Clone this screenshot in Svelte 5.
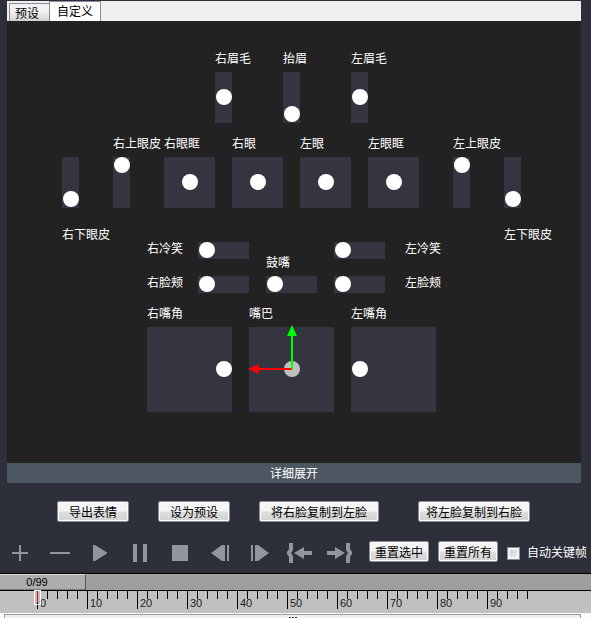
<script lang="ts">
	type Axis = 'x' | 'y';

	// row / col are tracks of the 17px face grid
	const sliders: { id: string; row: number; col: number; axis: Axis; value: number }[] = [
		{ id: 'brow-r', row: 2, col: 10, axis: 'y', value: 50 },
		{ id: 'brow-up', row: 2, col: 14, axis: 'y', value: 0 },
		{ id: 'brow-l', row: 2, col: 18, axis: 'y', value: 50 },
		{ id: 'lid-low-r', row: 7, col: 1, axis: 'y', value: 0 },
		{ id: 'lid-up-r', row: 7, col: 4, axis: 'y', value: 100 },
		{ id: 'lid-up-l', row: 7, col: 24, axis: 'y', value: 100 },
		{ id: 'lid-low-l', row: 7, col: 27, axis: 'y', value: 0 },
		{ id: 'sneer-r', row: 12, col: 9, axis: 'x', value: 0 },
		{ id: 'sneer-l', row: 12, col: 17, axis: 'x', value: 0 },
		{ id: 'cheek-r', row: 14, col: 9, axis: 'x', value: 0 },
		{ id: 'puff', row: 14, col: 13, axis: 'x', value: 0 },
		{ id: 'cheek-l', row: 14, col: 17, axis: 'x', value: 0 }
	];

	const pads = [
		{ id: 'socket-r', row: 7, col: 7, size: 3, align: 'center' },
		{ id: 'eye-r', row: 7, col: 11, size: 3, align: 'center' },
		{ id: 'eye-l', row: 7, col: 15, size: 3, align: 'center' },
		{ id: 'socket-l', row: 7, col: 19, size: 3, align: 'center' },
		{ id: 'corner-r', row: 17, col: 6, size: 5, align: 'end' },
		{ id: 'mouth', row: 17, col: 12, size: 5, align: 'center' },
		{ id: 'corner-l', row: 17, col: 18, size: 5, align: 'start' }
	];

	const labels = [
		{ for: 'brow-r', text: '右眉毛', row: 1, col: 10, place: 'above' },
		{ for: 'brow-up', text: '抬眉', row: 1, col: 14, place: 'above' },
		{ for: 'brow-l', text: '左眉毛', row: 1, col: 18, place: 'above' },
		{ for: 'lid-up-r', text: '右上眼皮', row: 6, col: 4, place: 'above' },
		{ for: 'socket-r', text: '右眼眶', row: 6, col: 7, place: 'above' },
		{ for: 'eye-r', text: '右眼', row: 6, col: 11, place: 'above' },
		{ for: 'eye-l', text: '左眼', row: 6, col: 15, place: 'above' },
		{ for: 'socket-l', text: '左眼眶', row: 6, col: 19, place: 'above' },
		{ for: 'lid-up-l', text: '左上眼皮', row: 6, col: 24, place: 'above' },
		{ for: 'lid-low-r', text: '右下眼皮', row: 11, col: 1, place: 'below' },
		{ for: 'lid-low-l', text: '左下眼皮', row: 11, col: 27, place: 'below' },
		{ for: 'sneer-r', text: '右冷笑', row: 12, col: 6, place: 'before' },
		{ for: 'sneer-l', text: '左冷笑', row: 12, col: 21, place: 'after' },
		{ for: 'puff', text: '鼓嘴', row: 13, col: 13, place: 'above' },
		{ for: 'cheek-r', text: '右脸颊', row: 14, col: 6, place: 'before' },
		{ for: 'cheek-l', text: '左脸颊', row: 14, col: 21, place: 'after' },
		{ for: 'corner-r', text: '右嘴角', row: 16, col: 6, place: 'above' },
		{ for: 'mouth', text: '嘴巴', row: 16, col: 12, place: 'above' },
		{ for: 'corner-l', text: '左嘴角', row: 16, col: 18, place: 'above' }
	];

	const tools = [
		{ name: '添加', path: 'M19 3h2v7h7v2h-7v7h-2v-7h-7v-2h7z' },
		{ name: '删除', path: 'M10 10h20v2H10z' },
		{ name: '播放', path: 'M13 3h2l12 7.5v1L15 19h-2z' },
		{ name: '暂停', path: 'M13 2h4v18h-4zM23 2h4v18h-4z' },
		{ name: '停止', path: 'M12 3h16v16H12z' },
		{ name: '上一帧', path: 'M11 11L22 3h3v16h-3zM27 3h2v16h-2z' },
		{ name: '下一帧', path: 'M11 3h2v16h-2zM15 3h3l11 8-11 8h-3z' },
		{
			name: '上一关键帧',
			path: 'M9 1h4v7l-2 3 2 3v7H9v-6l-2-3v-2l2-3zM14 11l10-6v4h8v4h-8v4z'
		},
		{
			name: '下一关键帧',
			path: 'M30 1h-4v7l2 3-2 3v7h4v-6l2-3v-2l-2-3zM25 11L15 5v4H7v4h8v4z'
		}
	];

	const ticks = Array.from({ length: 50 }, (_, i) => i * 2);

	let tab = $state('custom');
	let autoKey = $state(false);
</script>

<main>
	<section class="panel">
		<nav class="tabs">
			<button class="tab" class:active={tab === 'preset'} onclick={() => (tab = 'preset')}>预设</button>
			<button class="tab" class:active={tab === 'custom'} onclick={() => (tab = 'custom')}>自定义</button>
		</nav>

		<div class="face">
			{#each labels as label}
				<label
					for={label.for}
					class={label.place}
					style:grid-row={label.row}
					style:grid-column={label.col}>{label.text}</label
				>
			{/each}

			{#each sliders as s}
				<input
					type="range"
					id={s.id}
					class="slider {s.axis}"
					bind:value={s.value}
					style:grid-row="{s.row} / span {s.axis === 'y' ? 3 : 1}"
					style:grid-column="{s.col} / span {s.axis === 'x' ? 3 : 1}"
				/>
			{/each}

			{#each pads as pad}
				<div
					class="pad {pad.align}"
					style:grid-row="{pad.row} / span {pad.size}"
					style:grid-column="{pad.col} / span {pad.size}"
				>
					<button id={pad.id} class="knob" class:selected={pad.id === 'mouth'}>
						{#if pad.id === 'mouth'}
							<svg class="gizmo" viewBox="0 0 100 100">
								<path fill="#f00" d="M6 50l11-5v4h33v2H17v4z" />
								<path fill="#0f0" d="M50 6l5 11h-4v33h-2V17h-4z" />
							</svg>
						{/if}
					</button>
				</div>
			{/each}
		</div>

		<button class="expand">详细展开</button>
	</section>

	<div class="actions">
		<button class="btn">导出表情</button>
		<button class="btn">设为预设</button>
		<button class="btn">将右脸复制到左脸</button>
		<button class="btn last">将左脸复制到右脸</button>
	</div>

	<div class="toolbar">
		<div class="tools">
			{#each tools as tool}
				<button class="tool" aria-label={tool.name}>
					<svg viewBox="0 -1 40 23"><path d={tool.path} /></svg>
				</button>
			{/each}
		</div>
		<button class="btn small">重置选中</button>
		<button class="btn small">重置所有</button>
		<label class="check">
			<input type="checkbox" bind:checked={autoKey} />
			自动关键帧
		</label>
	</div>

	<section class="timeline">
		<div class="track">
			<button class="range">0/99</button>
		</div>
		<div class="ruler">
			{#each ticks as t}
				<span class="tick" class:major={t % 10 === 0}>{t % 10 === 0 ? t : ''}</span>
			{/each}
			<i class="playhead"></i>
		</div>
		<div class="splitter">
			<div class="drawer"><i></i><i></i><i></i></div>
		</div>
	</section>
</main>

<style>
	:global(body) {
		background: #2d2f3b;
	}

	main {
		font: 12px/17px 'Liberation Sans', 'Noto Sans CJK SC', sans-serif;
		color: #fff;
		overflow: hidden;
	}

	button,
	input {
		box-sizing: border-box;
		margin: 0;
		font: inherit;
	}

	button {
		padding: 0;
		border: none;
		white-space: nowrap;
		cursor: pointer;
	}

	.panel {
		margin: 1px 10px 0 7px;
		background: #222;
	}

	.tabs {
		display: flex;
		align-items: flex-end;
		height: 20px;
		padding-left: 2px;
		background: #efeff0;
	}

	.tab {
		height: 18px;
		padding: 2px 10px 0 5px;
		border: 1px solid #8b8c98;
		border-width: 1px 0 0 1px;
		background: linear-gradient(#f2f2f2 45%, #d0d0d0);
		color: #000;
	}

	.tab.active {
		height: 20px;
		padding: 1px 7px 0;
		border-width: 1px 1px 0;
		background: #fff;
	}

	/* every control sits on a square 17px module */
	.face {
		display: grid;
		grid-template-columns: repeat(27, 17px);
		grid-template-rows: repeat(21, 17px);
		justify-content: center;
		padding: 34px 5px 51px 0;
	}

	.face label {
		align-self: end;
		width: 0;
		white-space: nowrap;
	}

	.above {
		margin-bottom: 4px;
	}

	.below {
		margin-bottom: -2px;
	}

	.before,
	.after {
		margin-bottom: 1px;
	}

	.after {
		padding-left: 3px;
	}

	.slider,
	.pad {
		box-sizing: border-box;
		width: 100%;
		height: 100%;
		padding: 0 0 1px 1px;
		background: #343541;
	}

	.slider {
		appearance: none;
		min-width: 0;
	}

	.slider.y {
		writing-mode: vertical-lr;
		direction: rtl;
	}

	.slider::-webkit-slider-thumb {
		appearance: none;
		width: 16px;
		height: 16px;
		border-radius: 50%;
		background: #fff;
	}

	.pad {
		display: flex;
		align-items: center;
		justify-content: center;
	}

	.pad.start {
		justify-content: flex-start;
	}

	.pad.end {
		justify-content: flex-end;
	}

	.knob {
		position: relative;
		width: 16px;
		height: 16px;
		border-radius: 50%;
		background: #fff;
	}

	.knob.selected {
		background: #c0c0c0;
	}

	.gizmo {
		position: absolute;
		top: -42px;
		left: -42px;
		width: 100px;
		height: 100px;
		pointer-events: none;
	}

	.expand {
		display: block;
		width: 100%;
		height: 20px;
		padding-top: 2px;
		background: #4d5762;
		color: #fff;
	}

	.actions {
		display: flex;
		gap: 29px;
		padding: 18px 61px 0 57px;
	}

	.btn {
		height: 21px;
		padding: 2px 11px 0;
		border: 1px solid #8d8f94;
		border-radius: 2px;
		background: linear-gradient(#f5f5f5 48%, #dedede 52%, #d2d2d2);
		box-shadow: inset 0 0 0 1px #fafafa;
		color: #000;
		line-height: 16px;
	}

	.btn.last {
		margin-left: auto;
		padding: 2px 7px 0;
	}

	.btn.small {
		padding: 2px 5px 0;
	}

	.toolbar {
		display: flex;
		align-items: flex-start;
		gap: 9px;
		margin-top: 19px;
		padding-bottom: 8px;
	}

	.tools {
		display: flex;
	}

	.tool {
		width: 40px;
		height: 23px;
		background: none;
	}

	.tool svg {
		display: block;
		fill: #93959c;
	}

	.check {
		display: flex;
		align-items: center;
		gap: 7px;
		height: 24px;
		padding-top: 1px;
		box-sizing: border-box;
		white-space: nowrap;
	}

	.check input {
		appearance: none;
		width: 13px;
		height: 13px;
		border: 1px solid #8e8f8f;
		background: linear-gradient(135deg, #c4c8cc, #f6f6f6);
		box-shadow: inset 0 0 0 2px #f4f4f4;
	}

	.check input:checked {
		background: #3c5f8c;
	}

	.timeline {
		border-top: 1px solid #000;
		color: #222;
		font-size: 11px;
	}

	.track {
		background: #9f9f9f;
	}

	.range {
		display: block;
		width: 86px;
		height: 16px;
		padding-right: 11px;
		border: 1px solid #dcdcdc;
		border-width: 1px 1px 1px 0;
		border-right-color: #555;
		border-bottom-color: #777;
		background: #acacac;
		line-height: 14px;
	}

	.ruler {
		position: relative;
		display: flex;
		height: 22px;
		padding-left: 37px;
		border-top: 1px solid #000;
		background: #c0c0c0;
	}

	.tick {
		flex: none;
		box-sizing: border-box;
		width: 10px;
		height: 8px;
		border-left: 1px solid #000;
	}

	.tick.major {
		height: 18px;
		padding: 4px 0 0 2px;
	}

	.playhead {
		position: absolute;
		top: -1px;
		left: 34px;
		display: flex;
		justify-content: center;
		box-sizing: border-box;
		width: 7px;
		height: 15px;
		border: 1px solid #fff;
	}

	.playhead::before {
		content: '';
		width: 1px;
		height: 11px;
		background: #f00;
	}

	.splitter {
		padding: 1px 10px 0 4px;
		background: #fbfbfb;
	}

	.drawer {
		display: flex;
		justify-content: center;
		gap: 1px;
		padding-top: 2px;
		border: 1px solid #999;
		border-bottom: none;
		background: #f0f0f0;
	}

	.drawer i {
		width: 2px;
		height: 1px;
		background: #333;
	}
</style>
